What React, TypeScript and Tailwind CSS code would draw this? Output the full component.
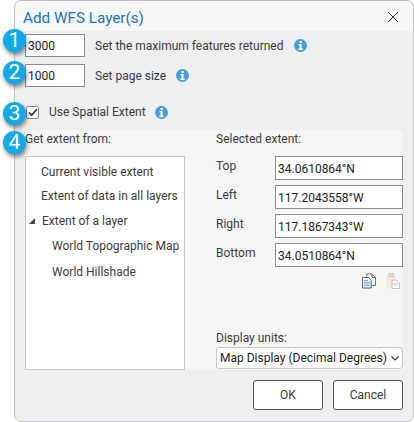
import React from "react";

const font = "font-['Roboto',sans-serif]";

function Info({ className = "" }: { className?: string }) {
  return (
    <span className={"flex size-[13px] items-center justify-center rounded-full bg-[#459fd8] " + className}>
      <svg width="5" height="9" viewBox="0 0 5 9" fill="white">
        <rect x="1.5" y="0" width="2.2" height="2" />
        <path d="M0.6 3h3v4.6h1V9H0.4V7.6h1.1V4.3H0.6z" />
      </svg>
    </span>
  );
}

function Badge({ n, className }: { n: number; className: string }) {
  return (
    <div
      className={
        "absolute left-[3px] flex size-[23px] items-center justify-center rounded-full bg-[#12a9e8] text-[21px] leading-none text-white shadow-[1px_3px_4px_rgba(0,0,0,0.45)] " +
        className
      }
    >
      {n}
    </div>
  );
}

function ExtentRow({ label, value }: { label: string; value: string }) {
  return (
    <div className="flex h-[24px] items-start">
      <span className="w-[59px] pt-[2px]">{label}</span>
      <div className="flex h-[24px] w-[128px] items-center border border-[#8c8c8c] bg-white pl-[2px] pt-[2px] text-[#222]">
        {value}
      </div>
    </div>
  );
}

function CopyIcons() {
  return (
    <div className="mt-[6px] flex justify-end gap-[10px] pr-[3px]">
      <svg width="14" height="16" viewBox="0 0 16 17" fill="none">
        <path d="M5.5 3.5v-3h6l4 4v9h-4" stroke="#555" fill="#fff" />
        <path d="M11.5 .5v4h4" stroke="#555" />
        <path d="M.5 4.5h7l3 3v9h-10z" fill="#fff" stroke="#444" />
        <path d="M2 8h5M2 10h7M2 12h7M2 14h7" stroke="#4aa3df" />
      </svg>
      <svg width="14" height="16" viewBox="0 0 15 17" fill="none">
        <rect x=".5" y="2.5" width="10" height="13" fill="#fae6d2" />
        <rect x="3" y="0.5" width="5" height="3" fill="#ddd" stroke="#c8c8c8" />
        <path d="M6.5 7.5h4l4 3v6h-8z" fill="#fff" stroke="#bbb" />
        <path d="M8 11h5M8 13h5" stroke="#ccc" />
      </svg>
    </div>
  );
}

export default function App() {
  return (
    <div className={"relative h-[422px] w-[414px] overflow-hidden bg-white pl-[14px] text-[12px] leading-[16px] text-[#3c3c3c] " + font}>
      {/* Dialog */}
      <div className="flex h-[422px] w-[400px] flex-col rounded-[7px] border border-[#c3c4c7] bg-[#eeeff1]">
        <div className="flex h-[30px] shrink-0 items-center justify-between rounded-t-[7px] bg-[#f7f8f8] pl-[8px] pr-[14px] pt-[2px]">
          <span className="pt-[1px] text-[15.25px] text-[#1f74b5]">Add WFS Layer(s)</span>
          <svg width="12" height="12" viewBox="0 0 12 12" stroke="#333" strokeWidth="1" fill="none">
            <path d="M1 1l10 10M11 1L1 11" />
          </svg>
        </div>

        <div className="flex flex-col px-[10px]">
          <div className="mt-[3px] flex h-[23px] items-center">
            <input readOnly value="3000" className="h-[23px] w-[60px] border border-[#8c8c8c] bg-white pl-[2px] text-[#222] outline-none" />
            <span className="ml-[10px] pt-[1px]">Set the maximum features returned</span>
            <Info className="ml-[11px]" />
          </div>
          <div className="mt-[7px] flex h-[23px] items-center">
            <input readOnly value="1000" className="h-[23px] w-[60px] border border-[#8c8c8c] bg-white pl-[2px] text-[#222] outline-none" />
            <span className="ml-[10px] pt-[1px]">Set page size</span>
            <Info className="ml-[10px]" />
          </div>
          <div className="mt-[17px] flex h-[16px] items-center pl-[1px]">
            <span className="flex size-[13px] items-center justify-center rounded-[2px] border border-[#8c8c8c] bg-white">
              <svg width="10" height="9" viewBox="0 0 10 9" fill="none" stroke="#333" strokeWidth="1.7">
                <path d="M1 4.5l2.5 2.7L9 1" />
              </svg>
            </span>
            <span className="ml-[10px]">Use Spatial Extent</span>
            <Info className="ml-[9px]" />
          </div>

          {/* Extent panel */}
          <div className="mt-[10px] flex h-[240px] bg-[#f5f7f7]">
            <div className="flex w-[160px] flex-col">
              <div className="h-[26px] pt-[1px]">Get extent from:</div>
              <div className="h-[214px] border border-[#c6c7c9] bg-white pl-[15px] pt-[7px]">
                <div className="h-[24px]">Current visible extent</div>
                <div className="h-[25px]">Extent of data in all layers</div>
                <div className="relative h-[25px] pl-[1px]">
                  <span className="absolute left-[-12px] top-[5px] h-0 w-0 border-b-[6px] border-l-[6px] border-b-[#444] border-l-transparent" />
                  Extent of a layer
                </div>
                <div className="h-[26px] pl-[11px]">World Topographic Map</div>
                <div className="pl-[11px]">World Hillshade</div>
              </div>
            </div>
            <div className="ml-[31px] flex w-[187px] flex-col">
              <div className="h-[26px] pt-[1px]">Selected extent:</div>
              <div className="flex flex-col gap-[5px]">
                <ExtentRow label="Top" value="34.0610864°N" />
                <ExtentRow label="Left" value="117.2043558°W" />
                <ExtentRow label="Right" value="117.1867343°W" />
                <ExtentRow label="Bottom" value="34.0510864°N" />
              </div>
              <CopyIcons />
              <div className="mt-[40px] h-[18px] pt-[1px]">Display units:</div>
              <div className="flex h-[22px] items-center justify-between rounded-[3px] border border-[#c6c7c9] bg-white pl-[3px] pr-[3px] text-[#222]">
                <span className="whitespace-nowrap">Map Display (Decimal Degrees)</span>
                <svg width="8" height="5" viewBox="0 0 8 5" fill="none" stroke="#333" strokeWidth="1.2">
                  <path d="M.5 .5L4 4 7.5 .5" />
                </svg>
              </div>
            </div>
          </div>

          <div className="mt-[10px] flex justify-end gap-[10px]">
            <button className="h-[30px] w-[70px] rounded-[3px] border border-[#555] bg-white">OK</button>
            <button className="h-[30px] w-[70px] rounded-[3px] border border-[#555] bg-white">Cancel</button>
          </div>
        </div>
      </div>

      <Badge n={1} className="top-[29px]" />
      <Badge n={2} className="top-[61px]" />
      <Badge n={3} className="top-[102px]" />
      <Badge n={4} className="top-[131px]" />
    </div>
  );
}
